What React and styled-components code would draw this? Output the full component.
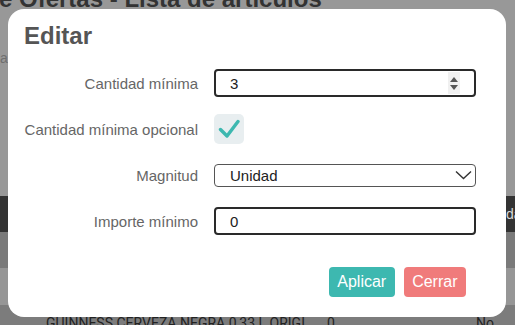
import React, { useState } from "react";
import styled, { createGlobalStyle } from "styled-components";

const GlobalStyle = createGlobalStyle`
  * { box-sizing: border-box; }
  html, body { margin: 0; padding: 0; }
  body {
    font-family: "Liberation Sans", Arial, sans-serif;
    background: #989898;
    overflow: hidden;
  }
`;

const Page = styled.div`
  width: 515px;
  height: 325px;
  overflow: hidden;
  background: #989898;
  display: flex;
  flex-direction: column;
`;

const PageTitle = styled.h1`
  margin: -15px 0 0 -1px;
  font-size: 24px;
  line-height: 28px;
  font-weight: bold;
  color: #333;
  white-space: nowrap;
`;

const Crumb = styled.div`
  margin-top: 37px;
  font-size: 14px;
  line-height: 16px;
  color: #6f6f6f;
`;

const Spacer = styled.div`
  flex: 0 0 ${(p) => p.$h}px;
`;

const Band = styled.div`
  flex: 0 0 ${(p) => p.$h}px;
  background: ${(p) => p.$bg};
  display: flex;
  align-items: center;
  justify-content: flex-end;
  font-size: 14px;
  color: #d8d8d8;
  white-space: nowrap;
  overflow: hidden;
`;

const Row = styled.div`
  flex: 1;
  background: #7c7c7c;
  display: grid;
  grid-template-columns: 46px 281px 149px 1fr;
  padding-top: 10px;
  font-family: Roboto, "Liberation Sans", sans-serif;
  font-size: 14px;
  color: #222;
  white-space: nowrap;
`;

const Cell = styled.span``;

const Modal = styled.div`
  position: fixed;
  left: 8px;
  top: 9px;
  width: 498px;
  height: 308px;
  background: #fff;
  border-radius: 16px;
  padding: 12px 30px 0 16px;
`;

const Title = styled.h2`
  margin: 0;
  font-size: 24px;
  line-height: 30px;
  font-weight: bold;
  color: #555;
`;

const Form = styled.div`
  margin-top: 9px;
  display: grid;
  grid-template-columns: 174px 262px;
  grid-auto-rows: 46px;
  column-gap: 16px;
  align-items: center;
`;

const Label = styled.label`
  text-align: right;
  font-size: 15px;
  color: #666;
  white-space: nowrap;
`;

const Field = styled.div`
  display: flex;
  align-items: center;
  height: 28px;
  border: 2px solid #2a2a2a;
  border-radius: 4px;
  padding: 0 14px 0 14px;
  background: #fff;
`;

const Input = styled.input`
  flex: 1;
  min-width: 0;
  border: none;
  outline: none;
  padding: 0;
  background: transparent;
  font-family: "Liberation Sans", Arial, sans-serif;
  font-size: 15px;
  color: #222;
`;

const Spinner = styled.div`
  width: 12px;
  height: 22px;
  background: #f0f0f0;
  display: flex;
  flex-direction: column;
  align-items: center;
  justify-content: center;
  gap: 3px;
`;

const Select = styled.div`
  display: flex;
  align-items: center;
  justify-content: space-between;
  height: 23px;
  border: 1px solid #555;
  border-radius: 4px;
  padding: 0 3px 0 15px;
  font-size: 15px;
  color: #222;
`;

const Check = styled.div`
  width: 30px;
  height: 30px;
  border-radius: 5px;
  background: #e8eef0;
  display: flex;
  align-items: center;
  justify-content: center;
`;

const Footer = styled.div`
  margin-top: 23px;
  padding-right: 10px;
  display: flex;
  justify-content: flex-end;
  gap: 9px;
`;

const Button = styled.button`
  height: 30px;
  padding: 0 8.5px;
  border: none;
  border-radius: 4px;
  background: ${(p) => p.$bg};
  color: #fff;
  font-family: "Liberation Sans", Arial, sans-serif;
  font-size: 16px;
  cursor: pointer;
`;

export default function App() {
  const [qty, setQty] = useState("3");
  const [amount, setAmount] = useState("0");

  return (
    <>
      <GlobalStyle />
      <Page>
        <PageTitle>e Ofertas - Lista de artículos</PageTitle>
        <Crumb>a</Crumb>
        <Spacer $h={130} />
        <Band $h={36} $bg="#333">
          <span style={{ width: 9 }}>da</span>
        </Band>
        <Band $h={36} $bg="#7a7a7a" />
        <Band $h={37} $bg="#969696" />
        <Row>
          <span />
          <Cell>GUINNESS CERVEZA NEGRA 0,33 L ORIGI</Cell>
          <Cell>0</Cell>
          <Cell>No</Cell>
        </Row>
      </Page>

      <Modal>
        <Title>Editar</Title>
        <Form>
          <Label>Cantidad mínima</Label>
          <Field>
            <Input value={qty} onChange={(e) => setQty(e.target.value)} />
            <Spinner>
              <svg width="8" height="5" viewBox="0 0 8 5">
                <path d="M0 5 L4 0 L8 5 Z" fill="#555" />
              </svg>
              <svg width="8" height="5" viewBox="0 0 8 5">
                <path d="M0 0 L4 5 L8 0 Z" fill="#555" />
              </svg>
            </Spinner>
          </Field>

          <Label>Cantidad mínima opcional</Label>
          <div>
            <Check>
              <svg width="22" height="20" viewBox="0 0 22 20">
                <path
                  d="M2.5 10.5 L9 17 L20 2.5"
                  fill="none"
                  stroke="#3db8b0"
                  strokeWidth="3.4"
                  strokeLinecap="round"
                  strokeLinejoin="round"
                />
              </svg>
            </Check>
          </div>

          <Label>Magnitud</Label>
          <Select>
            <span>Unidad</span>
            <svg width="17" height="10" viewBox="0 0 17 10">
              <path d="M1 1.5 L8.5 8.5 L16 1.5" fill="none" stroke="#333" strokeWidth="1.4" />
            </svg>
          </Select>

          <Label>Importe mínimo</Label>
          <Field>
            <Input value={amount} onChange={(e) => setAmount(e.target.value)} />
          </Field>
        </Form>
        <Footer>
          <Button $bg="#3db8b0">Aplicar</Button>
          <Button $bg="#f07b7b">Cerrar</Button>
        </Footer>
      </Modal>
    </>
  );
}
